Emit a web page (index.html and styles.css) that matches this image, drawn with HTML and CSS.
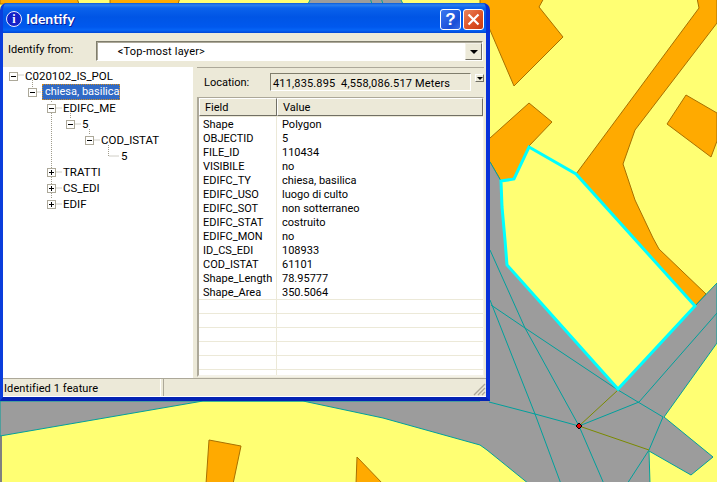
FILE: index.html
```html
<!DOCTYPE html>
<html lang="en">
<head>
<meta charset="utf-8">
<title>Identify</title>
<link rel="stylesheet" href="styles.css">
</head>
<body>
<div class="desktop">
  <svg class="map" width="717" height="482" viewBox="0 0 717 482">
    <rect width="717" height="482" fill="#ffff73"/>
    <rect x="0" y="436" width="2" height="46" fill="#808080"/>
    <g class="orange">
      <polygon points="0,-2 77,-2 79,4 0,4"/>
      <polygon points="110,-2 180,-2 178,4 110,4"/>
      <polygon points="480,-2 544,-2 539,7 563,37 514,86 490,30 480,10"/>
      <polygon points="529,103 552,122 529,146 514,179 501,181 490,162 480,160 480,145 490,138"/>
      <polygon points="697,-2 699,8 576,174 695,306 706,294 659,249 653,238 635,200 623,164 635,130 717,23 717,-2"/>
      <polygon points="686,95 717,113 717,141 711,157 667,124"/>
      <polygon points="209,440 241,446 233,484 206,484"/>
      <polygon points="357,457 383,484 356,484"/>
    </g>
    <g class="road">
      <polygon points="308,4 311,-2 400,-2 403,4"/>
      <polygon points="0,436 203,401 303,401 383,418 480,445 487,450 529,484 650,484 649,451 691,475 713,457 664,417 717,343 717,283 695,306 618,389 507,265 505,240 502,207 501,181 490,162 480,150 480,401 0,401"/>
    </g>
    <g class="lines">
      <polyline points="370,-2 372,4"/>
      <polyline points="381,-2 383,4"/>
      <polyline points="490,250 525,328 579,426 604,484"/>
      <polyline points="491,305 525,328 618,390 663,417"/>
      <polyline points="489,402 535,414 579,426"/>
      <polyline points="490,300 535,414 561,484"/>
      <polyline points="579,426 639,402 717,313"/>
      <polyline points="663,417 649,450 627,484"/>
    </g>
    <g class="olive">
      <polyline points="579,426 618,390"/>
      <polyline points="579,426 649,450"/>
    </g>
    <polygon class="selected" points="529,147 576,174 695,306 618,389 507,265 505,240 502,207 501,181 514,179"/>
    <polygon class="vertex" points="579,423 582,426 579,429 576,426"/>
  </svg>

  <section class="window">
    <header class="titlebar">
      <span class="title-icon">i</span>
      <span class="title-text">Identify</span>
      <span class="title-btn help">?</span>
      <span class="title-btn close">
        <svg width="13" height="13" viewBox="0 0 13 13"><path d="M1.5 1.5 11.5 11.5M11.5 1.5 1.5 11.5" stroke="#fff" stroke-width="2.2" fill="none"/></svg>
      </span>
    </header>
    <div class="client">
      <div class="from-row">
        <label class="from-label">Identify from:</label>
        <div class="combo">
          <span class="combo-text">&lt;Top-most layer&gt;</span>
          <span class="combo-btn"><i class="arrow"></i></span>
        </div>
      </div>
      <div class="panes">
        <div class="tree">
          <svg class="tree-lines" width="190" height="160" viewBox="0 0 190 160">
            <path d="M15.5 8H21M34.5 25H38M53.5 41H59M72.5 57H78M91.5 73H97M48.5 105H59M48.5 121H59M48.5 137H59M29.5 13V20M48.5 30V36M48.5 46V132M67.5 46V52M86.5 62V68M105.5 78V89H116"/>
          </svg>
          <div class="node lvl0"><span class="tog minus"></span><span class="label">C020102_IS_POL</span></div>
          <div class="node lvl1"><span class="tog minus"></span><span class="label sel">chiesa, basilica</span></div>
          <div class="node lvl2"><span class="tog minus"></span><span class="label">EDIFC_ME</span></div>
          <div class="node lvl3"><span class="tog minus"></span><span class="label">5</span></div>
          <div class="node lvl4"><span class="tog minus"></span><span class="label">COD_ISTAT</span></div>
          <div class="node lvl5"><span class="label">5</span></div>
          <div class="node lvl2"><span class="tog plus"></span><span class="label">TRATTI</span></div>
          <div class="node lvl2"><span class="tog plus"></span><span class="label">CS_EDI</span></div>
          <div class="node lvl2"><span class="tog plus"></span><span class="label">EDIF</span></div>
        </div>
        <div class="details">
          <div class="location">
            <span class="loc-label">Location:</span>
            <span class="loc-box">411,835.895&nbsp; 4,558,086.517 Meters</span>
            <span class="loc-btn"><i class="arrow tiny"></i></span>
          </div>
          <div class="list">
            <div class="list-head"><span class="hd hd-field">Field</span><span class="hd hd-value">Value</span></div>
            <div class="list-body">
              <div class="row"><span>Shape</span><span>Polygon</span></div>
              <div class="row"><span>OBJECTID</span><span>5</span></div>
              <div class="row"><span>FILE_ID</span><span>110434</span></div>
              <div class="row"><span>VISIBILE</span><span>no</span></div>
              <div class="row"><span>EDIFC_TY</span><span>chiesa, basilica</span></div>
              <div class="row"><span>EDIFC_USO</span><span>luogo di culto</span></div>
              <div class="row"><span>EDIFC_SOT</span><span>non sotterraneo</span></div>
              <div class="row"><span>EDIFC_STAT</span><span>costruito</span></div>
              <div class="row"><span>EDIFC_MON</span><span>no</span></div>
              <div class="row"><span>ID_CS_EDI</span><span>108933</span></div>
              <div class="row"><span>COD_ISTAT</span><span>61101</span></div>
              <div class="row"><span>Shape_Length</span><span>78.95777</span></div>
              <div class="row"><span>Shape_Area</span><span>350.5064</span></div>
              <div class="row empty"></div>
              <div class="row empty"></div>
              <div class="row empty"></div>
              <div class="row empty"></div>
              <div class="row empty"></div>
              <div class="row empty"></div>
            </div>
          </div>
        </div>
      </div>
      <footer class="status">
        <span class="status-main">Identified 1 feature</span>
        <span class="status-rest">
          <svg class="grip" width="13" height="13" viewBox="0 0 13 13"><path d="M12 1 1 12M12 5 5 12M12 9 9 12" stroke="#aca899" stroke-width="1.4" fill="none"/></svg>
        </span>
      </footer>
    </div>
  </section>
</div>
</body>
</html>
```

FILE: styles.css
```css
* { box-sizing: border-box; }
html, body { margin: 0; padding: 0; }
body { width: 717px; height: 482px; overflow: hidden; background: #ffff73; }
.desktop { position: relative; width: 717px; height: 482px; overflow: hidden; font: 11px/14px Roboto, "Liberation Sans", sans-serif; color: #000; }

/* map */
.map { position: absolute; left: 0; top: 0; display: block; }
.orange polygon { fill: #ffaa00; stroke: #a87000; stroke-width: 1; }
.road polygon { fill: #9c9c9c; stroke: #00a09c; stroke-width: 1; }
.lines polyline { fill: none; stroke: #00a09c; stroke-width: 1; }
.olive polyline { fill: none; stroke: #7a8a00; stroke-width: 1; }
.selected { fill: #ffff73; stroke: #00ffff; stroke-width: 3; }
.vertex { fill: #e60000; stroke: #000; stroke-width: 1; }

/* window */
.window { position: absolute; left: 0; top: 3px; width: 490px; height: 398px; display: flex; flex-direction: column; border-radius: 7px 7px 0 0; background: #0a3ddc; border-right: 4px solid #0831d9; border-left: 3px solid #0a3ddc; border-bottom: 4px solid #0423b4; overflow: hidden; }
.titlebar { height: 30px; margin: 0 -4px 0 -3px; padding: 6px 6px 0 6px; display: flex; align-items: flex-start; flex: none; background: linear-gradient(#0a5ad6 0, #2a7ff0 2px, #0a62ec 5px, #0055e5 14px, #0058ee 24px, #0664f6 27px, #0046d6 30px); }
.title-icon { width: 16px; height: 16px; margin: 2px 4px 0 0; border-radius: 50%; background: #1422c8; border: 1px solid #e8ecff; color: #fff; font: bold 12px/14px "Liberation Serif", serif; text-align: center; }
.title-text { flex: 1; margin-top: 1px; font: bold 14px/18px Lato, sans-serif; color: #fff; text-shadow: 1px 1px 0 #0a1f9c; }
.title-btn { width: 21px; height: 21px; border: 1px solid #fff; border-radius: 3px; display: flex; align-items: center; justify-content: center; }
.help { background: linear-gradient(135deg, #3a78f0, #1a4fd8 70%, #3a6ee8); color: #fff; font: bold 17px/19px "Liberation Sans", sans-serif; margin-right: 2px; }
.close { background: linear-gradient(135deg, #e8835c, #dc4f22 60%, #c63a12); }

.client { flex: 1; display: flex; flex-direction: column; background: #ece9d8; min-height: 0; }

/* identify from */
.from-row { height: 34px; flex: none; display: flex; padding: 8px 3px 0 5px; }
.from-label { width: 88px; line-height: 18px; }
.combo { width: 388px; height: 20px; display: flex; justify-content: space-between; background: #fff; border: 1px solid; border-color: #7f7d6c #fff #fff #7f7d6c; box-shadow: inset 1px 1px 0 #aca899; }
.combo-text { padding: 3px 0 0 21px; letter-spacing: 0.2px; }
.combo-btn { width: 17px; height: 17px; margin: 1px 0 0 0; background: #ece9d8; border: 1px solid; border-color: #f4f2e8 #716f64 #716f64 #f4f2e8; display: flex; align-items: center; justify-content: center; }
.arrow { display: block; width: 0; height: 0; border-style: solid; border-width: 4px 4px 0 4px; border-color: #000 transparent transparent; }
.arrow.tiny { border-width: 3px 3px 0 3px; }

.panes { flex: 1; min-height: 0; display: flex; gap: 4px; }

/* tree */
.tree { position: relative; width: 190px; background: #fff; padding-top: 1px; font-size: 11.5px; }
.tree-lines { position: absolute; left: 0; top: 0; pointer-events: none; }
.tree-lines path { fill: none; stroke: #a09c8c; stroke-width: 1; stroke-dasharray: 1 1; }
.node { position: relative; height: 16px; display: flex; align-items: center; white-space: nowrap; }
.lvl0 { padding-left: 6px; }
.lvl1 { padding-left: 25px; }
.lvl2 { padding-left: 44px; }
.lvl3 { padding-left: 63px; }
.lvl4 { padding-left: 82px; }
.lvl5 { padding-left: 117px; }
.tog { position: relative; flex: none; width: 9px; height: 9px; border: 1px solid #aca899; background: #fff; margin-right: 6px; }
.tog::before { content: ""; position: absolute; left: 1px; top: 3px; width: 5px; height: 1px; background: #000; }
.plus::after { content: ""; position: absolute; left: 3px; top: 1px; width: 1px; height: 5px; background: #000; }
.label { padding-left: 1px; }
.sel { background: #316ac5; color: #fff; font-size: 11px; outline: 1px dotted #d28a1e; outline-offset: -1px; padding: 1px 1px 1px 3px; margin-left: -1px; }

/* details */
.details { width: 287px; display: flex; flex-direction: column; border-top: 1px solid #aca899; margin-right: 2px; }
.location { height: 29px; flex: none; display: flex; align-items: flex-start; padding: 5px 0 0 7px; }
.loc-label { width: 66px; line-height: 20px; }
.loc-box { width: 201px; height: 18px; margin-right: 4px; padding: 2px 0 0 2px; line-height: 15px; white-space: nowrap; letter-spacing: 0.15px; border: 1px solid; border-color: #7f7d6c #fff #fff #7f7d6c; }
.loc-btn { width: 9px; height: 8px; margin-top: 1px; background: #ece9d8; border: 1px solid; border-color: #fff #716f64 #716f64 #fff; display: flex; align-items: center; justify-content: center; }
.list { height: 280px; flex: none; display: flex; flex-direction: column; background: #fff; border-left: 2px solid #aca899; border-top: 1px solid #aca899; border-right: 1px solid #f4f2e8; border-bottom: 2px solid #f4f2e8; overflow: hidden; }
.list-head { display: flex; height: 19px; flex: none; background: #ece9d8; }
.hd { height: 18px; padding: 2px 0 0 5px; border: 1px solid; border-color: #fff #716f64 #716f64 #fff; line-height: 14px; }
.hd-field { width: 78px; }
.hd-value { flex: 1; }
.list-body { flex: 1; min-height: 0; background: linear-gradient(#ece9d8, #ece9d8) 77px 0 / 1px 100% no-repeat #fff; }
.row { display: flex; height: 14px; line-height: 14px; white-space: nowrap; }
.row span { display: block; padding: 1px 0 0 5px; }
.row span:first-child { width: 78px; padding-left: 4px; }
.row.empty { border-top: 1px solid #ece9d8; }

/* status */
.status { height: 19px; flex: none; display: flex; gap: 2px; border-top: 1px solid #aca899; border-bottom: 1px solid #fff; }
.status-main { width: 158px; padding: 2px 0 0 1px; line-height: 15px; letter-spacing: 0.1px; border-right: 1px solid #fff; }
.status-rest { flex: 1; position: relative; border-left: 1px solid #aca899; }
.grip { position: absolute; right: 0; bottom: 0; }
```
